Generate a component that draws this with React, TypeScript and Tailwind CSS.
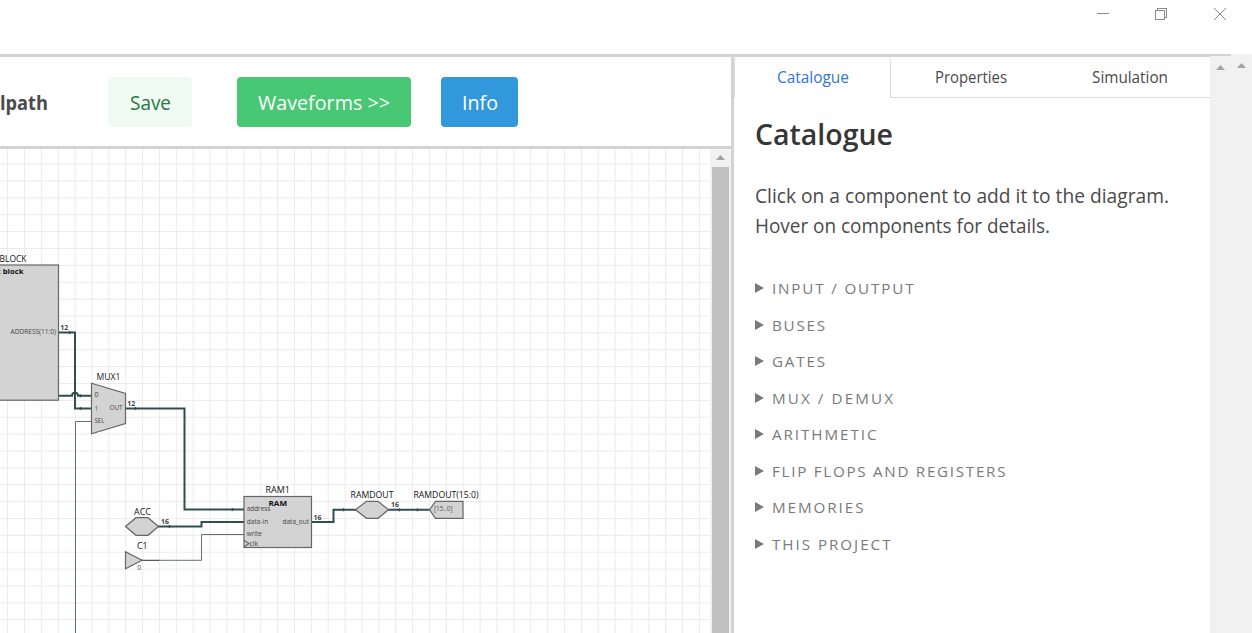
import React from "react";

const UI = "font-['Open_Sans','Noto_Sans',sans-serif]";

const CATEGORIES: { name: string; width: number }[] = [
  { name: "INPUT / OUTPUT", width: 141.5 },
  { name: "BUSES", width: 53 },
  { name: "GATES", width: 53 },
  { name: "MUX / DEMUX", width: 121 },
  { name: "ARITHMETIC", width: 104.5 },
  { name: "FLIP FLOPS AND REGISTERS", width: 233.5 },
  { name: "MEMORIES", width: 91.5 },
  { name: "THIS PROJECT", width: 118.5 },
];

type LabelProps = {
  text: string;
  width: number;
  size: number;
  height: number;
  baseline: number;
  weight?: number;
  color: string;
  spaced?: boolean;
};

/* A single line of text fitted to a known advance width. */
function Label({ text, width, size, height, baseline, weight = 370, color, spaced = false }: LabelProps) {
  return (
    <svg width={width} height={height} className="block shrink-0 overflow-visible">
      <text
        x={0}
        y={baseline}
        textLength={width}
        lengthAdjust={spaced ? "spacing" : "spacingAndGlyphs"}
        fontSize={size}
        fontWeight={weight}
        fill={color}
      >
        {text}
      </text>
    </svg>
  );
}

function WindowBar() {
  return (
    <header className="flex h-[54px] shrink-0 items-start justify-end bg-white pr-[25px] pt-[7px] text-[#8c8c8c]">
      <svg width="132" height="14" fill="none" stroke="currentColor" shapeRendering="crispEdges">
        <path d="M2 6.5h12M60.5 3.5h9v9h-9zM62.5 3v-1.500h9v9h-2" />
        <path d="M119 1l12 12M131 1l-12 12" shapeRendering="auto" />
      </svg>
    </header>
  );
}

function UpArrow() {
  return (
    <svg width="9" height="5" className="block">
      <path d="M0 5l4.500-5 4.500 5z" fill="#a3a3a3" />
    </svg>
  );
}

function Toolbar() {
  return (
    <div className="flex h-[92px] shrink-0 items-center border-b-[3px] border-[#d3d3d3] bg-white">
      <div className="w-[108px] shrink-0">
        <Label text="lpath" width={48} size={19.600} height={30} baseline={23} weight={700} color="#4a4a4a" />
      </div>
      <button className="flex h-[50px] w-[84px] items-center justify-center rounded-[4px] bg-[#effaf3]">
        <Label text="Save" width={41} size={19.600} height={30} baseline={23} color="#257942" />
      </button>
      <button className="ml-[45px] flex h-[50px] w-[174px] items-center justify-center rounded-[4px] bg-[#48c774]">
        <Label text="Waveforms >>" width={132} size={19.600} height={30} baseline={23} color="#ffffff" />
      </button>
      <button className="ml-[30px] flex h-[50px] w-[77px] items-center justify-center rounded-[4px] bg-[#3298dc]">
        <Label text="Info" width={36} size={19.600} height={30} baseline={23} color="#ffffff" />
      </button>
    </div>
  );
}

type NoteProps = { x: number; y: number; w: number; s: number; t: string; b?: boolean; c?: string };

function Note({ x, y, w, s, t, b, c = "#444" }: NoteProps) {
  return (
    <text x={x} y={y} textLength={w} lengthAdjust="spacingAndGlyphs" fontSize={s} fontWeight={b ? 700 : 400} fill={c}>
      {t}
    </text>
  );
}

/* The diagram uses window coordinates, so the view box starts at y = 149. */
function Diagram() {
  return (
    <svg width="710" height="484" viewBox="0 149 710 484" className="block shrink-0">
      <defs>
        <pattern id="grid" x="7.1" y="163.600" width="16.875" height="16.875" patternUnits="userSpaceOnUse">
          <path d="M.5 0v16.875M0 .5h16.875" stroke="#ebebeb" strokeWidth="1" />
        </pattern>
      </defs>
      <rect y="149" width="711" height="484" fill="#fff" />
      <rect y="149" width="711" height="484" fill="url(#grid)" />

      <g fill="none" stroke="#2f4f4f" strokeWidth="2">
        <path d="M58 332.500H75V408.500H92" />
        <path d="M58 395.800H72a3 3 0 0 1 6 0H92" />
        <path d="M125 408.500H184.500V509.500H244" />
        <path d="M158 526.500H201.500V522H244" />
        <path d="M311 522H333.500V509.800H356" />
        <path d="M388 509.800H430" />
      </g>
      <path d="M92 421.500H75.500V633M158 560.300H201.500V534.500H244" fill="none" stroke="#5d7474" />
      <path d="M140 560.300h19" stroke="#333" />
      <g fill="#2f4f4f">
        <path d="M69 331l2 1.500-2 1.500zM80 394.300l2 1.500-2 1.500zM80 407l2 1.500-2 1.500zM135 407l2 1.500-2 1.500zM232 508l2 1.500-2 1.500zM169 525l2 1.500-2 1.500zM343 508.300l2 1.500-2 1.500zM399 508.300l2 1.500-2 1.500zM417 508.300l2 1.500-2 1.500z" stroke="#2f4f4f" strokeWidth=".5" />
      </g>

      <g fill="#d3d3d3" stroke="#666" strokeWidth="1.2">
        <rect x="-40" y="265" width="98.500" height="135.200" />
        <path d="M91.500 383.300L125.500 393.500V423.500L91.500 433.700z" />
        <rect x="244" y="496.500" width="67.500" height="51" />
        <path d="M125.500 526.500l10.500-8.800h12l10.500 8.800-10.500 8.800h-12z" />
        <path d="M125.500 551.800v17l16.500-8.500z" />
        <path d="M355.500 509.800l11-8.500h11.500l10.500 8.500-10.500 8.500h-11.500z" />
        <path d="M429.500 509.800l6-8.500h27.500v17h-27.500z" />
        <path d="M244 540.500l5 3-5 3.500" fill="none" />
      </g>

      <Note x={-.5} y={262.200} w={27} s={9.500} t="BLOCK" c="#111" />
      <Note x={-1.500} y={274} w={25} s={7.500} t=": block" b c="#111" />
      <Note x={10.500} y={334} w={45.500} s={7} t="ADDRESS(11:0)" />
      <Note x={60.200} y={330} w={8} s={7} t="12" b />
      <Note x={96.500} y={380.200} w={24} s={9.500} t="MUX1" c="#222" />
      <Note x={94.500} y={397.200} w={4} s={7} t="0" />
      <Note x={95} y={410.500} w={3} s={7} t="1" />
      <Note x={94.500} y={423.200} w={10} s={7} t="SEL" />
      <Note x={109.500} y={410.300} w={13} s={7} t="OUT" />
      <Note x={127.200} y={406} w={8} s={7} t="12" b />
      <Note x={134} y={515.200} w={17} s={9.500} t="ACC" c="#111" />
      <Note x={161} y={524} w={8} s={7} t="16" b />
      <Note x={137} y={549.200} w={10.500} s={9.500} t="C1" c="#111" />
      <Note x={137.300} y={570} w={4} s={7} t="0" c="#555" />
      <Note x={265.500} y={493} w={24.500} s={9.500} t="RAM1" c="#111" />
      <Note x={268.500} y={506} w={18.500} s={7.800} t="RAM" b c="#111" />
      <Note x={246.800} y={511} w={23.500} s={7} t="address" />
      <Note x={246.800} y={524} w={21.500} s={7} t="data-in" />
      <Note x={246.800} y={536} w={15} s={7} t="write" />
      <Note x={249.500} y={546} w={8.500} s={7} t="clk" />
      <Note x={282.500} y={524} w={26.500} s={7} t="data_out" />
      <Note x={313.500} y={520} w={8} s={7} t="16" b />
      <Note x={350.500} y={498} w={43} s={9.500} t="RAMDOUT" c="#111" />
      <Note x={391} y={507} w={8} s={7} t="16" b />
      <Note x={413.500} y={498} w={65} s={9.500} t="RAMDOUT(15:0)" c="#111" />
      <Note x={434} y={511} w={18.500} s={7} t="[15..0]" c="#555" />
    </svg>
  );
}

function Canvas() {
  return (
    <div className="flex min-h-0 flex-1 overflow-hidden">
      <Diagram />
      <div className="flex flex-1 flex-col items-center bg-[#f1f1f1]">
        <div className="flex h-[18px] shrink-0 items-start pt-1.5">
          <UpArrow />
        </div>
        <div className="w-[17px] flex-1 bg-[#c1c1c1]" />
      </div>
    </div>
  );
}

function Catalogue() {
  return (
    <aside className="flex min-w-0 flex-1 flex-col">
      <nav className="flex h-[41px] shrink-0">
        <div className="flex w-[157px] justify-center rounded-t-[4px] border-x border-[#dbdbdb] pt-[8px]">
          <Label text="Catalogue" width={72} size={15.700} height={24} baseline={18} color="#3273dc" />
        </div>
        <div className="flex w-[159px] justify-center border-b border-[#dbdbdb] pt-[8px]">
          <Label text="Properties" width={72} size={15.700} height={24} baseline={18} color="#4a4a4a" />
        </div>
        <div className="flex flex-1 justify-center border-b border-[#dbdbdb] pr-px pt-[8px]">
          <Label text="Simulation" width={76} size={15.700} height={24} baseline={18} color="#4a4a4a" />
        </div>
      </nav>
      <div className="flex flex-col pl-[21px] pt-[18px]">
        <Label text="Catalogue" width={138} size={29.500} height={40} baseline={29} weight={600} color="#363636" />
        <div className="flex flex-col pt-[25px]">
          <Label text="Click on a component to add it to the diagram." width={414} size={19.600} height={30} baseline={22} color="#4a4a4a" />
          <Label text="Hover on components for details." width={295} size={19.600} height={30} baseline={22} color="#4a4a4a" />
        </div>
        <ul className="flex flex-col pt-[35px]">
          {CATEGORIES.map((c) => (
            <li key={c.name} className="flex h-[36.5px] items-start">
              <svg width="17" height="24" className="block shrink-0">
                <path d="M0 7v10l9-5z" fill="#7a7a7a" />
              </svg>
              <Label text={c.name} width={c.width} size={15.200} height={24} baseline={18} color="#7a7a7a" spaced />
            </li>
          ))}
        </ul>
      </div>
    </aside>
  );
}

export default function App() {
  return (
    <div className={`flex h-[633px] w-[1252px] flex-col overflow-hidden bg-white ${UI}`}>
      <WindowBar />
      <div className="flex min-h-0 flex-1">
        <main className="flex min-w-0 flex-1 border-t-[3px] border-[#d3d3d3]">
          <section className="flex w-[734px] shrink-0 flex-col border-r-[3px] border-[#d3d3d3]">
            <Toolbar />
            <Canvas />
          </section>
          <Catalogue />
          <div className="-mt-px flex w-[21px] justify-center bg-[#f1f1f1] pt-[9px]">
            <UpArrow />
          </div>
        </main>
        <div className="flex w-[21px] justify-center bg-[#f1f1f1] pt-[9px]">
          <UpArrow />
        </div>
      </div>
    </div>
  );
}
